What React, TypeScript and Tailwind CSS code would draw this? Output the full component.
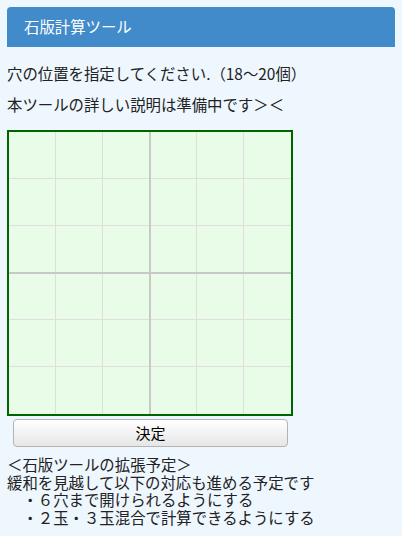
import React from 'react';

const Board: React.FC = () => {
  const inner = 282;
  const cell = inner / 6;
  const thin = [1, 2, 4, 5];
  return (
    <svg width="286" height="286" viewBox="0 0 286 286" className="block">
      <rect x="0" y="0" width="286" height="286" fill="#e8fce8" />
      {thin.map((k) => (
        <g key={k}>
          <line x1={2 + cell * k - 0.5} y1="2" x2={2 + cell * k - 0.5} y2="284" stroke="#dedede" strokeWidth="1" />
          <line x1="2" y1={2 + cell * k - 0.5} x2="284" y2={2 + cell * k - 0.5} stroke="#dedede" strokeWidth="1" />
        </g>
      ))}
      <line x1="143" y1="2" x2="143" y2="284" stroke="#c8c8c8" strokeWidth="2" />
      <line x1="2" y1="143" x2="284" y2="143" stroke="#c8c8c8" strokeWidth="2" />
      <rect x="1" y="1" width="284" height="284" fill="none" stroke="#006400" strokeWidth="2" />
    </svg>
  );
};

const App: React.FC = () => {
  return (
    <div className="min-h-screen bg-[#eef6fe] p-[7px] font-['Noto_Sans_CJK_JP',sans-serif] text-[15.4px] text-[#222]">
      <div className="flex h-[40px] items-center rounded-t-[4px] bg-[#428bca] pl-[17px] text-[15.4px] text-white">
        石版計算ツール
      </div>
      <p className="mt-[16px] leading-[20px]">穴の位置を指定してください.（18～20個）</p>
      <p className="mt-[11px] leading-[20px]">本ツールの詳しい説明は準備中です＞＜</p>
      <div className="mt-[16px]">
        <Board />
      </div>
      <button className="mt-[3px] ml-[6px] block h-[28px] w-[275px] rounded-[4px] border border-[#b4b4b4] bg-gradient-to-b from-white to-[#e6e6e6] text-[15px] text-black">
        決定
      </button>
      <div className="mt-[9px] leading-[17.6px]">
        <p>＜石版ツールの拡張予定＞</p>
        <p>緩和を見越して以下の対応も進める予定です</p>
        <p>　・６穴まで開けられるようにする</p>
        <p>　・２玉・３玉混合で計算できるようにする</p>
      </div>
    </div>
  );
};

export default App;
